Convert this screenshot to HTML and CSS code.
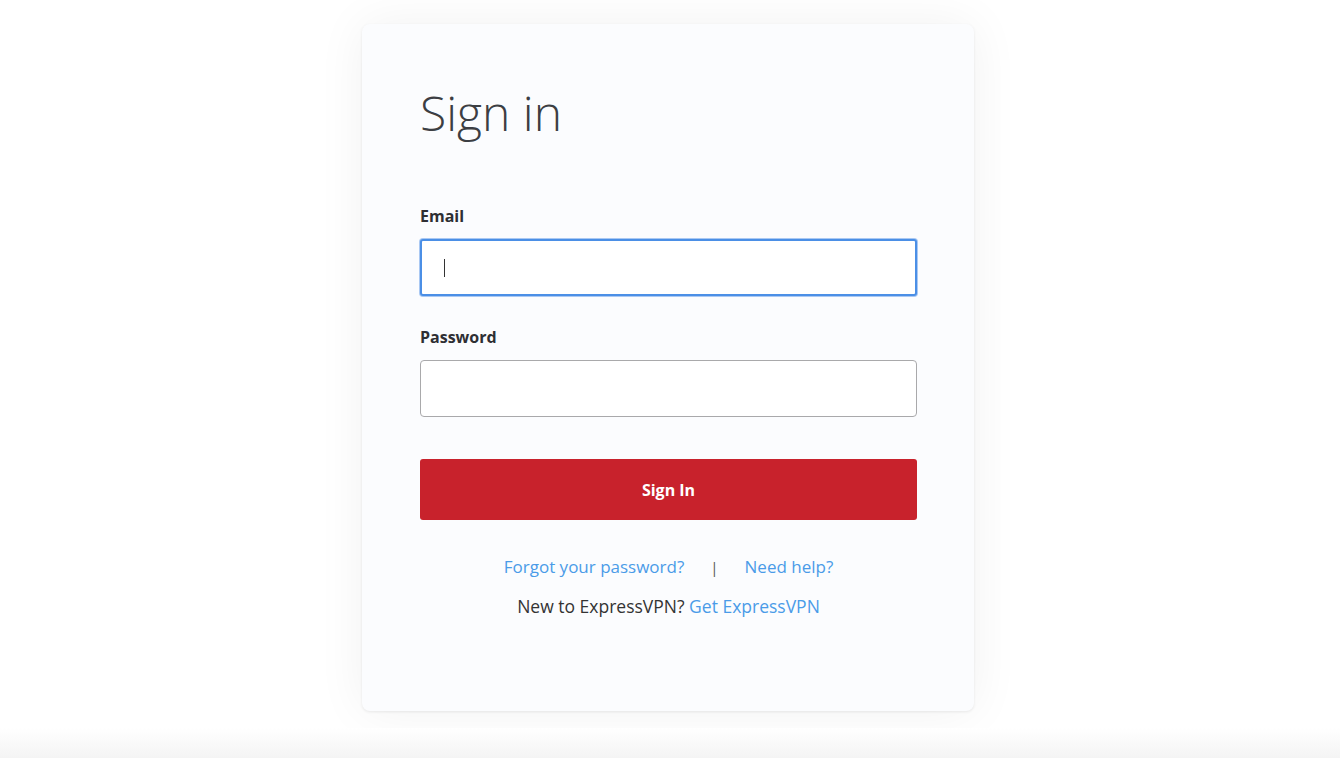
FILE: index.html
```html
<!DOCTYPE html>
<html lang="en">
<head>
<meta charset="utf-8">
<title>Sign in</title>
<link rel="stylesheet" href="styles.css">
</head>
<body>
<main class="page">
  <section class="card">
    <h1 class="title">Sign in</h1>
    <form class="form">
      <label class="label" for="email">Email</label>
      <div class="input input-focus"><span class="caret"></span></div>
      <label class="label label-pw" for="pw">Password</label>
      <div class="input"></div>
      <button type="button" class="btn">Sign In</button>
    </form>
    <div class="links">
      <a class="link">Forgot your password?</a>
      <span class="sep">|</span>
      <a class="link">Need help?</a>
    </div>
    <p class="new">New to ExpressVPN? <a class="link">Get ExpressVPN</a></p>
  </section>
  <div class="shade"></div>
</main>
</body>
</html>
```

FILE: styles.css
```css
* { box-sizing: border-box; }
html, body { margin: 0; padding: 0; background: #ffffff; }
body { font-family: "Open Sans", "Liberation Sans", sans-serif; color: #333; }
.page {
  min-height: 758px;
  display: flex;
  flex-direction: column;
  align-items: center;
}
.card {
  margin: 24px 4px 0 0;
  width: 612px;
  height: 687px;
  background: #fbfcfe;
  border-radius: 8px;
  padding: 61px 57px 0 58px;
  box-shadow: 0 1px 3px rgba(0,0,0,0.08), 0 0 50px rgba(0,0,0,0.06);
}
.title {
  margin: 0;
  font-size: 48px;
  line-height: 56px;
  font-weight: 300;
  color: #3c3e43;
  letter-spacing: 0;
}
.form { display: flex; flex-direction: column; margin-top: 65px; }
.label {
  font-size: 16px;
  line-height: 20px;
  font-weight: 700;
  color: #2e2f33;
}
.label-pw { margin-top: 31px; }
.input {
  margin-top: 13px;
  height: 57px;
  background: #fff;
  border: 1px solid #a9a9ab;
  border-radius: 4px;
  display: flex;
  align-items: center;
  padding-left: 22px;
}
.input-focus {
  border: 2px solid #4b8fe6;
  box-shadow: 0 0 0 1px #a9c8f3;
  border-radius: 3px;
}
.caret { width: 1px; height: 18px; background: #333; }
.btn {
  margin-top: 42px;
  height: 61px;
  border: 0;
  border-radius: 3px;
  background: #c8222c;
  color: #fff;
  font-family: inherit;
  font-size: 16px;
  font-weight: 700;
}
.links {
  margin-top: 35px;
  display: flex;
  justify-content: center;
  align-items: center;
  gap: 26px;
  font-size: 17px;
  line-height: 24px;
}
.link { color: #4a9be8; text-decoration: none; }
.sep { color: #555; font-size: 15px; }
.new {
  margin: 15px 0 0;
  text-align: center;
  font-size: 17.5px;
  line-height: 24px;
  color: #333;
}
.shade {
  margin-top: auto;
  width: 100%;
  height: 30px;
  background: linear-gradient(#ffffff, #f4f4f4);
}
```
